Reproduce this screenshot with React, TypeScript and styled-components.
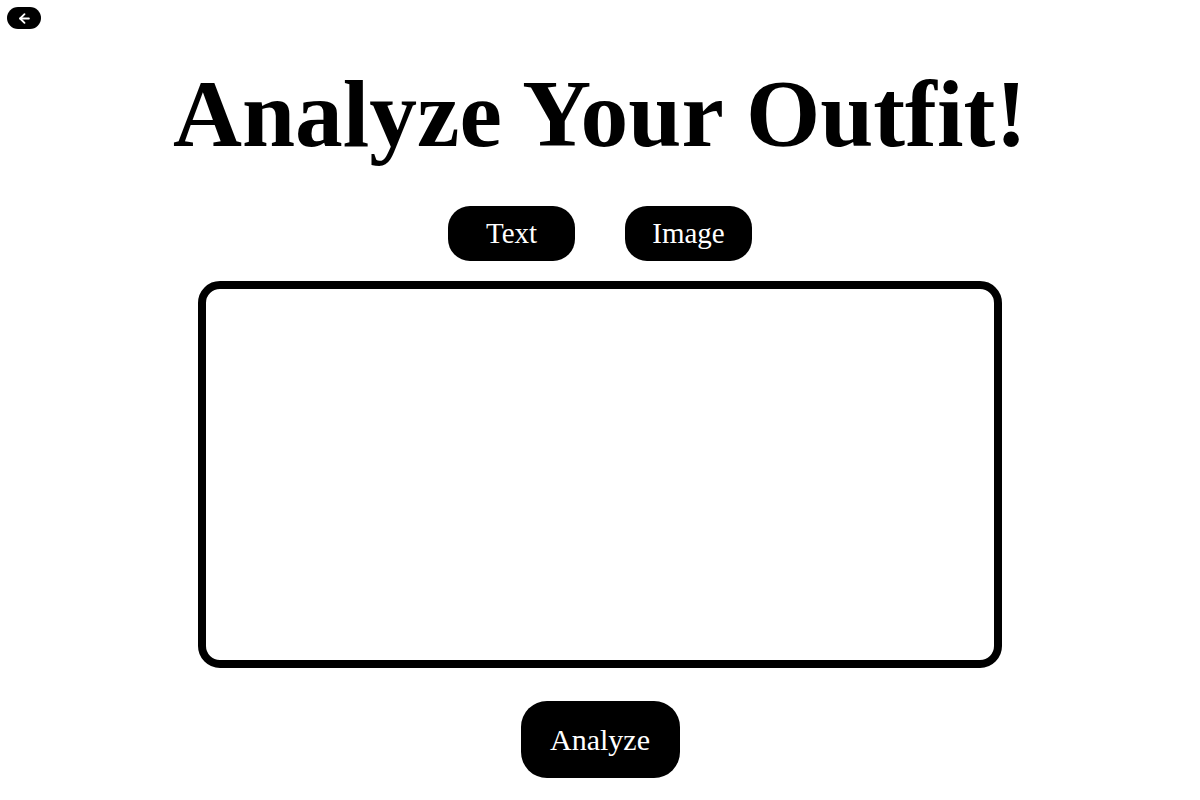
import React, { useState } from "react";
import styled, { createGlobalStyle } from "styled-components";
import { ArrowLeft } from "lucide-react";

const GlobalStyle = createGlobalStyle`
  html, body {
    margin: 0;
    padding: 0;
    background: #ffffff;
    font-family: "Liberation Serif", "Times New Roman", serif;
  }
  * { box-sizing: border-box; }
`;

const Page = styled.div`
  display: flex;
  flex-direction: column;
  align-items: center;
  padding: 7px 7px 0;
  min-height: 800px;
`;

const TopBar = styled.div`
  align-self: stretch;
  display: flex;
`;

const BackButton = styled.button`
  width: 34px;
  height: 22px;
  border: none;
  border-radius: 11px;
  background: #000;
  color: #fff;
  display: flex;
  align-items: center;
  justify-content: center;
  padding: 0;
  cursor: pointer;
`;

const Title = styled.h1`
  margin: 37px 0 0;
  height: 96px;
  font-family: "Liberation Serif", "Times New Roman", serif;
  font-weight: 700;
  font-size: 95.5px;
  line-height: 96px;
  color: #000;
  text-align: center;
`;

const ModeRow = styled.div`
  display: flex;
  gap: 50px;
  margin-top: 44px;
`;

const PillButton = styled.button<{ $w: number; $h: number; $r: number; $fs: number }>`
  width: ${(p) => p.$w}px;
  height: ${(p) => p.$h}px;
  border-radius: ${(p) => p.$r}px;
  border: none;
  background: #000;
  color: #fff;
  font-family: "Liberation Serif", "Times New Roman", serif;
  font-size: ${(p) => p.$fs}px;
  display: flex;
  align-items: center;
  justify-content: center;
  padding: 0;
  cursor: pointer;
`;

const InputBox = styled.textarea`
  margin-top: 20px;
  width: 804px;
  height: 387px;
  border: 8px solid #000;
  border-radius: 22px;
  resize: none;
  outline: none;
  padding: 16px;
  font-family: "Liberation Serif", "Times New Roman", serif;
  font-size: 22px;
  background: #fff;
`;

const AnalyzeWrap = styled.div`
  margin-top: 33px;
`;

export default function App() {
  const [mode, setMode] = useState<"text" | "image">("text");
  const [value, setValue] = useState("");
  return (
    <>
      <GlobalStyle />
      <Page>
        <TopBar>
          <BackButton aria-label="Back">
            <ArrowLeft size={15} strokeWidth={3} color="#fff" />
          </BackButton>
        </TopBar>
        <Title>Analyze Your Outfit!</Title>
        <ModeRow>
          <PillButton $w={127} $h={55} $r={22} $fs={29} onClick={() => setMode("text")}>
            Text
          </PillButton>
          <PillButton $w={127} $h={55} $r={22} $fs={29} onClick={() => setMode("image")}>
            Image
          </PillButton>
        </ModeRow>
        <InputBox value={value} onChange={(e) => setValue(e.target.value)} data-mode={mode} />
        <AnalyzeWrap>
          <PillButton $w={159} $h={77} $r={26} $fs={30}>
            Analyze
          </PillButton>
        </AnalyzeWrap>
      </Page>
    </>
  );
}
